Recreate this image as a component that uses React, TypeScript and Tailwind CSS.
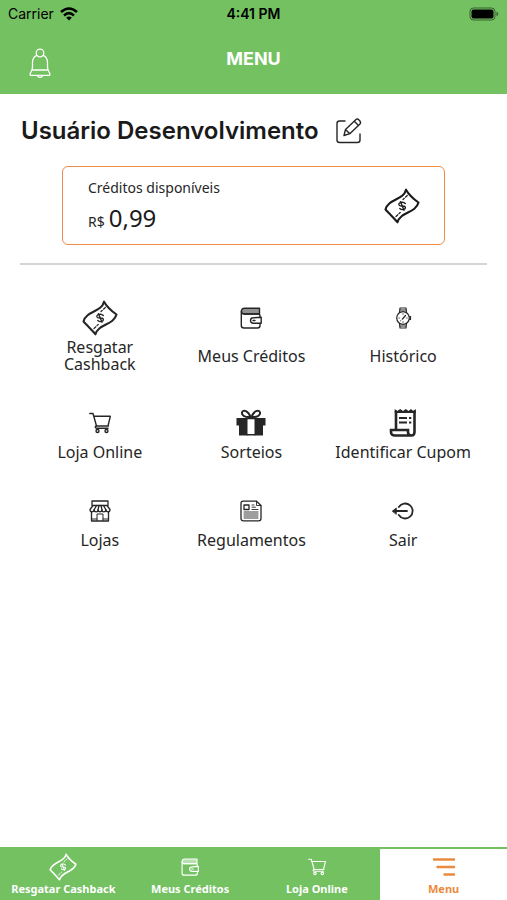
import type { ReactNode } from "react";

type IconProps = { className?: string };

function Svg({ className, box = 24, width = 1.5, children }: { className?: string; box?: number; width?: number; children: ReactNode }) {
  return (
    <svg viewBox={`0 0 ${box} ${box}`} className={className} fill="none" stroke="currentColor" strokeWidth={width} strokeLinecap="round" strokeLinejoin="round" aria-hidden="true">
      {children}
    </svg>
  );
}

function BillIcon({ className }: IconProps) {
  return (
    <Svg className={className} box={36} width={2.1}>
      <path d="M22 1.700C19.500 12.500 4.500 10.500 1.500 21.500C5.500 25.500 9.500 30 13.500 34.300C16.500 23.500 31.500 25.500 34.500 14.500C31 12 25.500 8 22 1.700Z" />
      <path d="M23.300 7.500L19 11.500M12 28.500L16.200 24.500" strokeWidth={1.2} strokeDasharray="2.500 1.600" />
      <path d="M21.300 15.500C19 13 14 14.500 15 17C16.200 19.300 20 16.800 21.300 19C22 21.500 18 22.500 15.800 20.500M16.500 13.700L20 22.300" strokeWidth={1.4} />
    </Svg>
  );
}

function WalletIcon({ className }: IconProps) {
  return (
    <Svg className={className} box={22} width={1.4}>
      <path d="M1.500 4.500C1.500 2.400 2.500 1.200 4.500 1.200H19.500V7H4C2.300 7 1.500 6.200 1.500 4.500Z" fill="currentColor" fillOpacity={0.5} />
      <path d="M1.300 4V18.500C1.300 20.300 2.300 21 4 21H17.500C19.200 21 20 20 20 18.500V16.500M20 10.300V8.800C20 7.600 19.200 7 18 7H4" />
      <path d="M21.200 10.300V16.300H13.500C9.500 16.300 9.500 10.800 13.500 10.800Z" />
      <path d="M13 13.500H15" />
    </Svg>
  );
}

function WatchIcon({ className }: IconProps) {
  return (
    <Svg className={className} box={22} width={1.2}>
      <circle cx="11" cy="11" r="6.300" />
      <path d="M7.500 5.500L8 1H14L14.500 5.500M7.500 16.500L8 21H14L14.500 16.500M8 3H14M8 19H14M17.500 9.500H18.500V12.500H17.500" />
      <path d="M10.500 12L13.500 8.500" />
      <path d="M11 6.700V7.300M11 14.700V15.300M6.800 11H7.300M14.700 11H15.200M8.500 13.800L9 13.400" strokeWidth={0.9} />
    </Svg>
  );
}

function CartIcon({ className }: IconProps) {
  return (
    <Svg className={className} box={22} width={1.4}>
      <path d="M.8 1.500H4L7.500 14H19.500M4.800 4.300H21.300L19 14" />
      <path d="M7.500 14C5.800 14 5.800 16.200 7.500 16.200H19" />
      <circle cx="8.500" cy="19" r="1.500" />
      <circle cx="17.500" cy="19" r="1.500" />
    </Svg>
  );
}

function GiftIcon({ className }: IconProps) {
  return (
    <Svg className={className} box={30} width={2}>
      <path d="M14.500 9C12.500 3 7 1 6 4.500C5.500 7.500 9 9.500 14.500 9ZM15.500 9C17.500 3 23 1 24 4.500C24.500 7.500 21 9.500 15.500 9Z" />
      <path d="M.5 10H11.500V27.500H3V17.500H.5ZM29.500 10H18.500V27.500H27V17.500H29.500Z" fill="currentColor" stroke="none" />
      <path d="M11 10.500H19M11 26.800H19" strokeWidth={1.4} />
    </Svg>
  );
}

function ReceiptIcon({ className }: IconProps) {
  return (
    <Svg className={className} box={28} width={2.6}>
      <path d="M7 2.500V20M25.500 2.500V23C25.500 25.500 24.500 26.500 22.500 26.500H6C3.200 26.500 2 25 2 23V21H19V23C19 25.500 20.500 26.500 22.500 26.500" strokeLinejoin="miter" />
      <path d="M5.700 0L8.300 2L11.200 0L14 2L16.800 0L19.500 2L22 0L24.200 2L26.800 0V4H5.700Z" fill="currentColor" stroke="none" />
      <path d="M11 9H17M11 13.500H17M21 9H21.300M21 13.500H21.300" strokeWidth={2} strokeLinecap="square" />
    </Svg>
  );
}

function StoreIcon({ className }: IconProps) {
  return (
    <Svg className={className} box={22} width={1.3}>
      <path d="M3 5.500V1H19V5.500M4 5.500H18L21 9.500C21 12.500 17.500 12.500 17 10C16.500 12.500 13 12.500 13 10C12.500 12.500 9.500 12.500 9 10C9 12.500 5.500 12.500 5 10C4.500 12.500 1 12.500 1 9.500Z" />
      <path d="M7.500 5.500L5 10M10 5.500L9 10M12 5.500L13 10M14.500 5.500L17 10M2.500 12V21H19.500V12" />
      <path d="M8 20.500V14H14V20.500M2.500 19H8M14 19H19.500" strokeWidth={1} />
    </Svg>
  );
}

function NewsIcon({ className }: IconProps) {
  return (
    <Svg className={className} box={22} width={1.3}>
      <path d="M3 1.200H16.500L21 5.500V18.500C21 20 20 20.800 18.700 20.800H3.500C2 20.800 1 20 1 18.500V3.200C1 2 1.700 1.200 3 1.200Z" />
      <path d="M4 5H9V9.500H4Z" />
      <path d="M16.500 1.200V5.500H21" strokeWidth={0.9} />
      <path d="M12 5H14M12 7.200H15.500M12 9.500H18M4 12H18M4 14H18M4 16H18M4 18H18" strokeWidth={0.9} />
    </Svg>
  );
}

function ExitIcon({ className }: IconProps) {
  return (
    <Svg className={className} box={22} width={1.8}>
      <path d="M6.800 7A7.500 7.500 0 1 1 6.800 15M2 11H15" />
      <path d="M.5 11L4.300 8V14Z" fill="currentColor" strokeWidth={0.8} />
    </Svg>
  );
}

function MenuIcon({ className }: IconProps) {
  return (
    <Svg className={className} box={24} width={2.4}>
      <path d="M2 4.500H22M5.500 12H22M12.500 19.500H22" />
    </Svg>
  );
}

function BellIcon({ className }: IconProps) {
  return (
    <Svg className={className} box={32} width={1.3}>
      <circle cx="16" cy="6" r="3.800" />
      <path d="M12.800 8.300C9.500 9.500 8.500 12.500 8.500 16V20C8.500 23 7.500 24.500 6.200 26.500V28.300H25.800V26.500C24.500 24.500 23.500 23 23.500 20V16C23.500 12.500 22.500 9.500 19.200 8.300M8.300 23H23.700M13.500 28.500C14 31 18 31 18.500 28.500" />
    </Svg>
  );
}

function EditIcon({ className }: IconProps) {
  return (
    <Svg className={className} box={28} width={1.4}>
      <path d="M10 4H4.500C2.800 4 2 5 2 6.500V23C2 24.500 3 25.500 4.500 25.500H22.500C24 25.500 25 24.500 25 23V17" />
      <path d="M9 18.500L10.500 12.500L21 2.500C22.500 1 27 4.500 25 7L14.800 16.700ZM19.300 4.300L23.500 8.500M10.500 12.500L14.800 16.700" />
    </Svg>
  );
}

const largeRow = [
  { label: "Resgatar Cashback", icon: <BillIcon className="size-9" /> },
  { label: "Meus Créditos", icon: <WalletIcon className="size-[22px]" /> },
  { label: "Histórico", icon: <WatchIcon className="size-[22px]" /> },
];

const smallRows = [
  { label: "Loja Online", icon: <CartIcon className="size-[22px]" /> },
  { label: "Sorteios", icon: <GiftIcon className="size-[30px]" /> },
  { label: "Identificar Cupom", icon: <ReceiptIcon className="size-7" /> },
  { label: "Lojas", icon: <StoreIcon className="size-[22px]" /> },
  { label: "Regulamentos", icon: <NewsIcon className="size-[22px]" /> },
  { label: "Sair", icon: <ExitIcon className="size-[22px]" /> },
];

const tabs = [
  { label: "Resgatar Cashback", icon: <BillIcon className="size-7" />, active: false },
  { label: "Meus Créditos", icon: <WalletIcon className="size-[18px]" />, active: false },
  { label: "Loja Online", icon: <CartIcon className="size-[18px]" />, active: false },
  { label: "Menu", icon: <MenuIcon className="size-6" />, active: true },
];

export default function App() {
  return (
    <div className="flex min-h-screen flex-col bg-white font-['Noto_Sans',sans-serif] text-[#262626]">
      <header className="bg-[#73c161] font-['Inter',sans-serif]">
        <div className="grid h-7 grid-cols-3 items-center px-2 text-sm text-black">
          <div className="flex items-center gap-1.5">
            <span>Carrier</span>
            <svg viewBox="0 0 18 14" className="h-3.5 w-[18px]" fill="none" stroke="currentColor" strokeWidth="2.600" role="img" aria-label="Wi-Fi">
              <path d="M1 5Q9 -2 17 5M4 8.400Q9 4 14 8.400" />
              <path d="M9 13.500L6.200 10.700Q9 8.500 11.800 10.700Z" fill="currentColor" stroke="none" />
            </svg>
          </div>
          <span className="text-center font-semibold">4:41 PM</span>
          <svg viewBox="0 0 30 14" className="h-3.5 w-[30px] justify-self-end" role="img" aria-label="Bateria">
            <rect x="1" y="1" width="25" height="12" rx="3.500" fill="none" stroke="#000" strokeOpacity=".5" />
            <rect x="2.500" y="2.500" width="22" height="9" rx="2" />
            <path d="M27.500 4.500Q31 7 27.500 9.500Z" fillOpacity=".5" />
          </svg>
        </div>
        <div className="grid h-[66px] grid-cols-3 items-center px-6 pt-1">
          <button type="button" aria-label="Notificações" className="w-8 text-white">
            <BellIcon className="size-8" />
          </button>
          <h1 className="pb-2 text-center text-lg font-bold text-white">MENU</h1>
        </div>
      </header>

      <main className="flex-1 px-5 pt-[21px]">
        <div className="flex h-8 items-center gap-4 pl-px">
          <h2 className="font-['Inter',sans-serif] text-2xl font-semibold whitespace-nowrap text-[#1a1a1a]">Usuário Desenvolvimento</h2>
          <button type="button" aria-label="Editar usuário">
            <EditIcon className="size-7" />
          </button>
        </div>

        <section className="mx-[42px] mt-[19px] flex h-[79px] items-center justify-between rounded-md border-[1px] border-[#ee8b46] px-6">
          <div className="pl-px">
            <p className="text-sm leading-5">Créditos disponíveis</p>
            <p className="mt-1 flex items-baseline gap-1 leading-8">
              <span className="text-sm">R$</span>
              <span className="text-2xl text-[#1a1a1a]">0,99</span>
            </p>
          </div>
          <BillIcon className="size-9 text-[#1a1a1a]" />
        </section>

        <hr className="mt-[18px] border-t-2 border-[#d4d4d4]" />

        <nav aria-label="Menu principal" className="mt-[35px] pr-2 pl-1">
          <ul className="grid grid-cols-3">
            {largeRow.map((item) => (
              <li key={item.label} className="flex justify-center">
                <button type="button" className="flex flex-col items-center">
                  <span className="flex h-9 items-center">{item.icon}</span>
                  <span className="flex h-10 max-w-28 items-center text-center text-base leading-[17px]">{item.label}</span>
                </button>
              </li>
            ))}
          </ul>
          <ul className="mt-8 grid grid-cols-3 gap-y-8">
            {smallRows.map((item) => (
              <li key={item.label} className="flex justify-center">
                <button type="button" className="flex flex-col items-center whitespace-nowrap">
                  <span className="flex h-[30px] items-center">{item.icon}</span>
                  <span className="mt-0.5 flex h-6 items-center text-base">{item.label}</span>
                </button>
              </li>
            ))}
          </ul>
        </nav>
      </main>

      <nav aria-label="Navegação inferior" className="grid h-[53px] grid-cols-4 border-t-2 border-[#73c161]">
        {tabs.map((tab) => (
          <a
            key={tab.label}
            href="#"
            aria-current={tab.active ? "page" : undefined}
            className={
              tab.active
                ? "flex flex-col items-center bg-white pt-1 text-[#e98b3f]"
                : "flex flex-col items-center bg-[#73c161] pt-1 text-white"
            }
          >
            <span className="flex h-7 items-center">{tab.icon}</span>
            <span className="text-[11px] leading-4 font-bold whitespace-nowrap">{tab.label}</span>
          </a>
        ))}
      </nav>
    </div>
  );
}
